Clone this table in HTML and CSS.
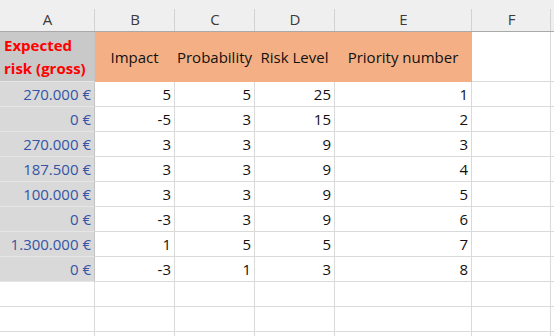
FILE: index.html
```html
<!DOCTYPE html>
<html>
<head>
<meta charset="utf-8">
<link rel="stylesheet" href="styles.css">
</head>
<body>
<div class="sheet">
  <div class="hd">A</div><div class="hd">B</div><div class="hd">C</div><div class="hd">D</div><div class="hd">E</div><div class="hd">F</div><div class="hd hd-rest"></div>

  <div class="c a a-title"><span>Expected<br>risk (gross)</span></div>
  <div class="c org">Impact</div><div class="c org">Probability</div><div class="c org">Risk Level</div><div class="c org">Priority number</div><div class="c"></div><div class="c rest"></div>

  <div class="c a num">270.000 €</div><div class="c num">5</div><div class="c num">5</div><div class="c num">25</div><div class="c num">1</div><div class="c"></div><div class="c rest"></div>
  <div class="c a num">0 €</div><div class="c num">-5</div><div class="c num">3</div><div class="c num">15</div><div class="c num">2</div><div class="c"></div><div class="c rest"></div>
  <div class="c a num">270.000 €</div><div class="c num">3</div><div class="c num">3</div><div class="c num">9</div><div class="c num">3</div><div class="c"></div><div class="c rest"></div>
  <div class="c a num">187.500 €</div><div class="c num">3</div><div class="c num">3</div><div class="c num">9</div><div class="c num">4</div><div class="c"></div><div class="c rest"></div>
  <div class="c a num">100.000 €</div><div class="c num">3</div><div class="c num">3</div><div class="c num">9</div><div class="c num">5</div><div class="c"></div><div class="c rest"></div>
  <div class="c a num">0 €</div><div class="c num">-3</div><div class="c num">3</div><div class="c num">9</div><div class="c num">6</div><div class="c"></div><div class="c rest"></div>
  <div class="c a num">1.300.000 €</div><div class="c num">1</div><div class="c num">5</div><div class="c num">5</div><div class="c num">7</div><div class="c"></div><div class="c rest"></div>
  <div class="c a num">0 €</div><div class="c num">-3</div><div class="c num">1</div><div class="c num">3</div><div class="c num">8</div><div class="c"></div><div class="c rest"></div>

  <div class="c"></div><div class="c"></div><div class="c"></div><div class="c"></div><div class="c"></div><div class="c"></div><div class="c rest"></div>
  <div class="c"></div><div class="c"></div><div class="c"></div><div class="c"></div><div class="c"></div><div class="c"></div><div class="c rest"></div>
  <div class="c"></div><div class="c"></div><div class="c"></div><div class="c"></div><div class="c"></div><div class="c"></div><div class="c rest"></div>
</div>
</body>
</html>
```

FILE: styles.css
```css
html, body {
  margin: 0;
  padding: 0;
  background: #ffffff;
  overflow: hidden;
}

.sheet {
  width: 554px;
  height: 336px;
  overflow: hidden;
  display: grid;
  grid-template-columns: 95px 80px 80px 80px 137px 79px 1fr;
  grid-template-rows: 32px 50px;
  grid-auto-rows: 25px;
  font-family: "Open Sans", "Noto Sans", sans-serif;
  font-size: 15px;
  line-height: 20px;
  color: #111111;
}

.hd {
  box-sizing: border-box;
  background: linear-gradient(#d2d2d2, #d2d2d2) right bottom / 1px 22px no-repeat, #efefef;
  border-bottom: 1px solid #a9a9a9;
  color: #3a3a3a;
  text-align: center;
  padding-top: 9px;
}

.hd-rest {
  background: #efefef;
}

.c {
  box-sizing: border-box;
  border-right: 1px solid #dadada;
  border-bottom: 1px solid #dadada;
  display: flex;
  align-items: center;
  padding: 0 3px;
  white-space: nowrap;
  overflow: hidden;
}

.c.rest {
  border-right: none;
}

.num {
  justify-content: flex-end;
}

.a {
  background: #d9d9d9;
  border-bottom-color: #e6e6e6;
  border-right-color: #c4c4c4;
  color: #3454a6;
}

.a-title {
  background: #c9c9c9;
  color: #ff0000;
  font-weight: 700;
  line-height: 23px;
  padding-left: 4px;
}

.org {
  background: #f4b084;
  border-right-color: #f4b084;
  border-bottom-color: #f4b084;
  justify-content: center;
}
```
